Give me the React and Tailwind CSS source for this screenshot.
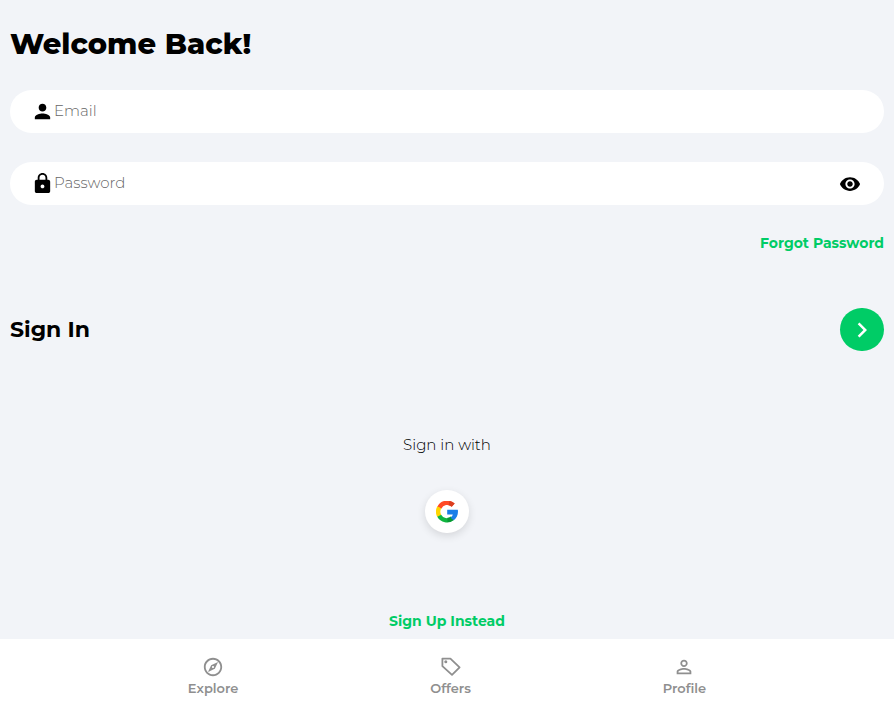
import React from "react";
import { MdPerson, MdLock, MdVisibility, MdKeyboardArrowRight, MdOutlineExplore, MdPersonOutline } from "react-icons/md";

function GoogleLogo() {
  return (
    <svg viewBox="0 0 22 22" className="h-[22px] w-[22px]" fill="none" strokeWidth="4.4" aria-hidden="true">
      <path d="M3.3 6.7A8.7 8.7 0 0 1 17.2 4.2" stroke="#ff4a26" />
      <path d="M13 2.2A8.7 8.7 0 0 1 17.2 4.2" stroke="#d93f21" />
      <path d="M3.3 6.4a8.8 8.8 0 0 0 0 8.6" stroke="#ffd500" />
      <path d="M3.2 14.8A8.7 8.7 0 0 0 16.4 17.3" stroke="#0fb53f" />
      <path d="M11.5 19a8.7 8.7 0 0 0 4.9-1.7" stroke="#0a9636" />
      <path d="M11.2 8.8h10.6c.7 4.3-.8 8-4 10.4l-3.4-2.5c1.2-.8 2-1.8 2.4-3.3h-5.6z" fill="#1a7ee8" stroke="none" />
    </svg>
  );
}

function TagIcon({ className }) {
  return (
    <svg viewBox="0 0 22 22" className={className} fill="none" stroke="currentColor" strokeWidth="1.8" strokeLinejoin="round" aria-hidden="true">
      <path d="M2.4 2.6h8l9.2 8.7-7.6 7.6-9.6-8.7z" />
      <circle cx="5.8" cy="5.8" r="1.5" fill="currentColor" stroke="none" />
    </svg>
  );
}

const tabs = [
  { label: "Explore", Icon: MdOutlineExplore },
  { label: "Offers", Icon: TagIcon },
  { label: "Profile", Icon: MdPersonOutline },
];

export default function App() {
  return (
    <div className="flex min-h-screen flex-col bg-[#f2f4f8] font-['Montserrat',Inter,sans-serif] text-black">
      <main className="flex flex-1 flex-col px-2.5 pt-6">
        <h1 className="text-[29px] leading-10 font-extrabold">Welcome Back!</h1>
        <form className="mt-[26px] flex flex-col" onSubmit={(e) => e.preventDefault()}>
          <label className="flex h-[43px] items-center rounded-full bg-white pr-[23px] pl-[21px]">
            <MdPerson className="size-[23px] shrink-0" />
            <input type="email" aria-label="Email" placeholder="Email" className="min-w-0 flex-1 text-[15px] font-light outline-none placeholder:text-[#666]" />
          </label>
          <div className="mt-[29px] flex h-[43px] items-center rounded-full bg-white pr-[23px] pl-[21px]">
            <MdLock className="size-[23px] shrink-0" />
            <input type="password" aria-label="Password" placeholder="Password" className="min-w-0 flex-1 text-[15px] font-light outline-none placeholder:text-[#666]" />
            <button type="button" aria-label="Show password">
              <MdVisibility className="size-[22px]" />
            </button>
          </div>
          <a href="#forgot" className="mt-7 self-end text-[14px] leading-5 font-bold text-[#00cc66]">Forgot Password</a>
          <div className="mt-[55px] flex items-center justify-between">
            <h2 className="text-[22px] leading-8 font-bold">Sign In</h2>
            <button type="submit" aria-label="Sign In" className="flex h-[43px] w-11 items-center justify-center rounded-full bg-[#00cc66] text-white">
              <MdKeyboardArrowRight className="size-[30px]" />
            </button>
          </div>
        </form>
        <div className="mt-21 flex flex-col items-center">
          <p className="text-[15px] leading-5 font-light">Sign in with</p>
          <button type="button" aria-label="Sign in with Google" className="mt-[35px] flex h-[43px] w-11 items-center justify-center rounded-full bg-white shadow-[0_3px_8px_rgba(0,0,0,0.12)]">
            <GoogleLogo />
          </button>
        </div>
        <a href="#sign-up" className="mt-[78px] mb-2 self-center text-[14px] leading-5 font-bold text-[#00cc66]">Sign Up Instead</a>
      </main>
      <nav className="flex h-[72px] justify-evenly gap-1 bg-white pt-[17px] text-[#8f8f8f]">
        {tabs.map(({ label, Icon }) => (
          <a key={label} href={`#${label.toLowerCase()}`} className="flex flex-col items-center">
            <Icon className="size-[22px]" />
            <span className="text-[13px] leading-5 font-semibold">{label}</span>
          </a>
        ))}
      </nav>
    </div>
  );
}
